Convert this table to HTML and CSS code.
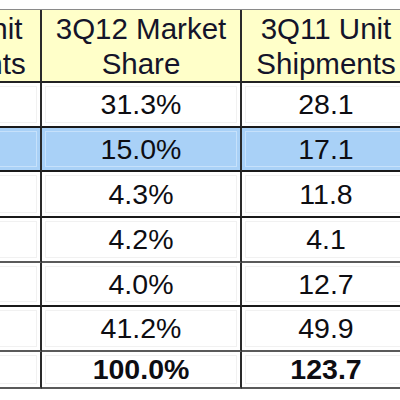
FILE: index.html
```html
<!DOCTYPE html>
<html>
<head>
<meta charset="utf-8">
<link rel="stylesheet" href="styles.css">
</head>
<body>
<div class="sheet">
  <div class="cell head">3Q12 Unit<br>Shipments</div>
  <div class="cell head">3Q12 Market<br>Share</div>
  <div class="cell head">3Q11 Unit<br>Shipments</div>

  <div class="cell r1"></div><div class="cell r1">31.3%</div><div class="cell r1">28.1</div>
  <div class="cell r2 sel"></div><div class="cell r2 sel">15.0%</div><div class="cell r2 sel">17.1</div>
  <div class="cell r3"></div><div class="cell r3">4.3%</div><div class="cell r3">11.8</div>
  <div class="cell r4 gray"></div><div class="cell r4 gray">4.2%</div><div class="cell r4 gray">4.1</div>
  <div class="cell r5"></div><div class="cell r5">4.0%</div><div class="cell r5">12.7</div>
  <div class="cell r6 gray"></div><div class="cell r6 gray">41.2%</div><div class="cell r6 gray">49.9</div>
  <div class="cell r7 gray total"></div><div class="cell r7 gray total">100.0%</div><div class="cell r7 gray total">123.7</div>
</div>
</body>
</html>
```

FILE: styles.css
```css
html, body {
  margin: 0;
  padding: 0;
  background: #ffffff;
}
body {
  width: 400px;
  height: 400px;
  overflow: hidden;
  font-family: "Liberation Sans", Arial, sans-serif;
}
.sheet {
  display: grid;
  grid-template-columns: 170px 200px 170px;
  grid-template-rows: 73px 45px 44px 46px 45px 44px 45px 37px;
  margin-left: -128px;
  margin-top: 9px;
  width: 540px;
  border-top: 1px solid #8a8a8a;
}
.cell {
  box-sizing: border-box;
  border-right: 2px solid #2a2a2a;
  border-bottom: 2px solid #1a1a1a;
  display: flex;
  align-items: center;
  justify-content: center;
  text-align: center;
  font-size: 28.5px;
  color: #0d0d12;
  background: #fff;
  box-shadow: inset 3px 3px 0 #fff, inset -3px -3px 0 #fff, inset 4px 4px 0 #f1f1f1, inset -4px -4px 0 #f1f1f1;
}
.head {
  background: #ffffc9;
  font-size: 29.5px;
  line-height: 35px;
  color: #14142a;
  box-shadow: none;
  border-bottom-color: #222;
  padding-top: 1px;
  align-items: flex-start;
}
.sel {
  background: #a9d1f7;
  box-shadow: inset 3px 3px 0 #a9d1f7, inset -3px -3px 0 #a9d1f7, inset 4px 4px 0 #c6e1fb, inset -4px -4px 0 #c6e1fb;
}
.gray {
  border-bottom-color: #5a5a5a;
}
.total {
  font-weight: bold;
}
```
